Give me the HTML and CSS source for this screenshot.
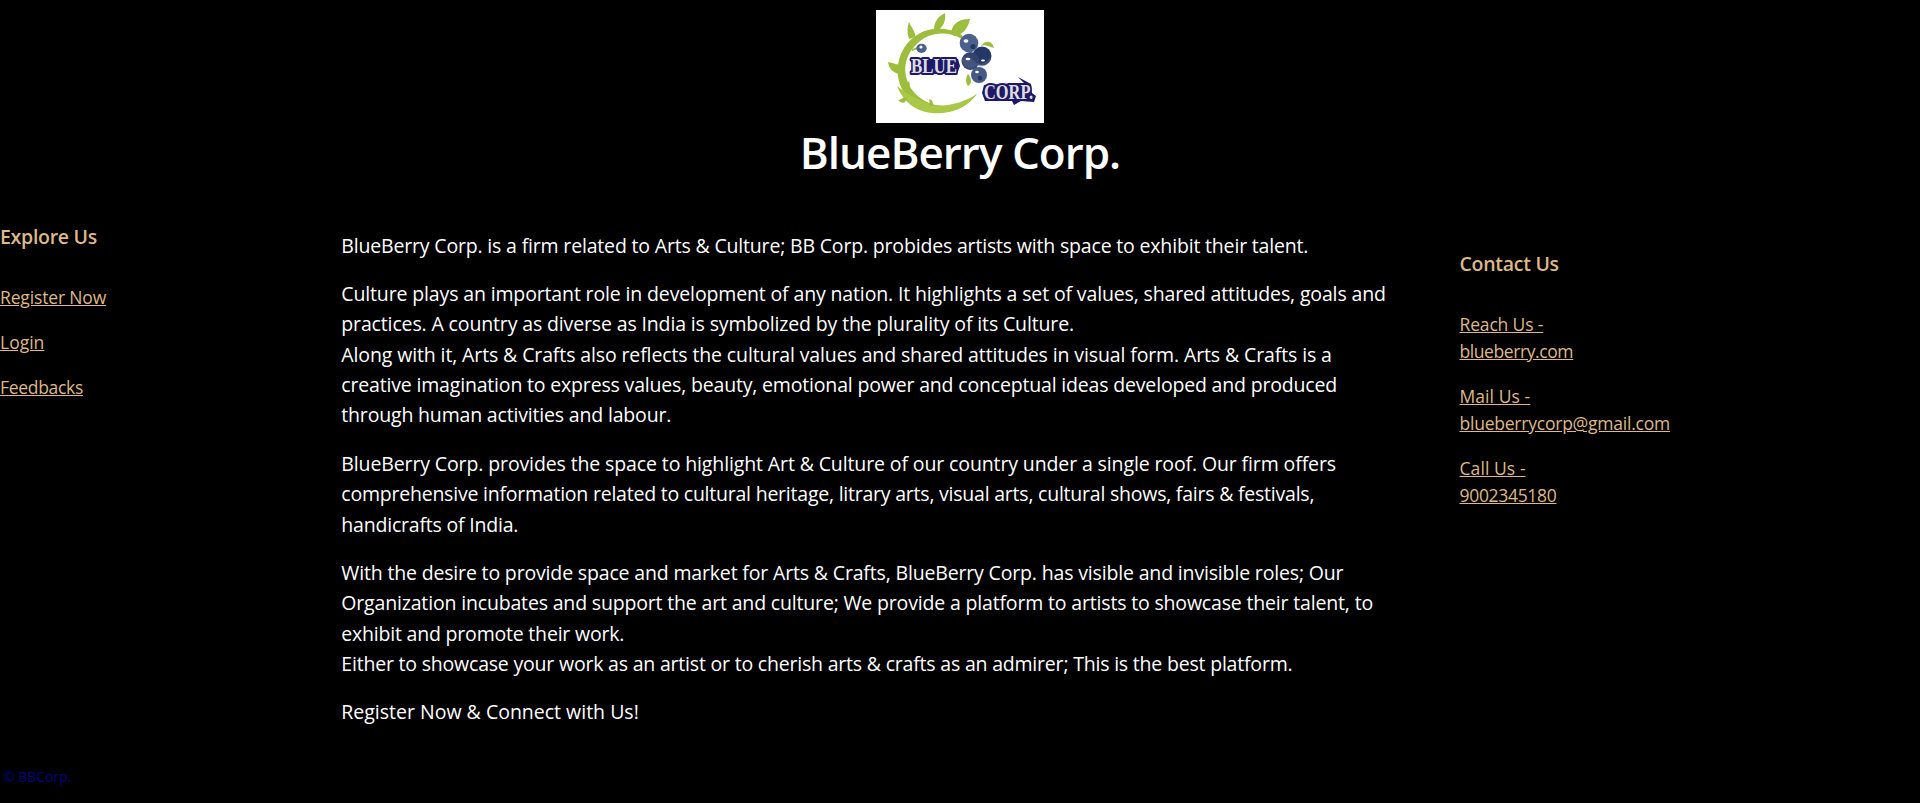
FILE: index.html
```
<!DOCTYPE html>
<html lang="en">
<head>
<meta charset="utf-8">
<title>BlueBerry Corp.</title>
<link rel="stylesheet" href="styles.css">
</head>
<body>
<header class="header">
  <svg class="logo" viewBox="0 0 168 113" role="img" aria-label="Blue Corp. logo">
    <rect width="168" height="113" fill="#fff"/>
    <path d="M86 25C68 14 42 16 28 38C12 65 28 97 57 102C77 105 92 96 101 84C84 96 65 100 49 91C27 79 23 52 39 36C51 22 70 20 86 29Z" fill="#9dbd3d"/>
    <path d="M21 76C29 96 46 105 66 103C82 101 94 93 101 84C84 95 61 100 44 90C35 87 29 82 21 76Z" fill="#a9c847"/>
    <path d="M58 20C58 11 63 6 69 3C70 11 67 17 62 20ZM75 24C76 12 85 9 94 9C92 19 86 25 79 26ZM33 29C31 23 31 17 33 12C36 19 40 22 39 27ZM24 64C17 63 13 59 12 52C18 53 22 55 26 55ZM29 92C27 94 24 92 22 90C25 90 28 86 31 88ZM54 96C53 93 54 92 53 89C57 90 57 93 57 96ZM32 76C32 73 31 73 33 71C35 77 33 80 31 80ZM36 39L42 37L42 39L36 41ZM105 36C109 30 116 30 118 38C113 37 109 34 105 36ZM92 64C96 69 96 74 92 76C89 72 90 67 92 64Z" fill="#9dbd3d"/>
    <circle cx="106" cy="46" r="9.500" fill="#253766"/>
    <circle cx="93" cy="33" r="9.300" fill="#4c608c"/>
    <circle cx="94.500" cy="51" r="9" fill="#33426f"/>
    <circle cx="103" cy="65" r="8" fill="#475a87"/>
    <ellipse cx="45.500" cy="38.300" rx="5.200" ry="4.600" fill="#4c608c"/>
    <path d="M98 52C105 56 112 52 115 46C115 57 105 58 98 55ZM84 35C88 42 98 42 102 35C101 44 87 45 84 35ZM86 48C91 46 98 49 101 54C99 61 87 61 86 48Z" fill="#596b94" opacity=".45"/>
    <circle cx="97" cy="36.500" r="2.600" fill="#253766"/>
    <circle cx="104" cy="68" r="2.200" fill="#253766"/>
    <g fill="#fff"><ellipse cx="90" cy="31" rx="2.400" ry="1.800"/><ellipse cx="92" cy="49" rx="2.300" ry="1.200"/><ellipse cx="107" cy="50.500" rx="2" ry="1"/><ellipse cx="101" cy="62" rx="1.800" ry="1.300"/><circle cx="45" cy="37" r="1.600"/></g>
    <path d="M34 49H82L84 56L81 64H35L37 57Z" fill="#1d1868"/>
    <path d="M108 75L140 73L148 73L142 67L155 74L156 83L160 86L158 92L145 91L138 95L136 91L109 91L106 83Z" fill="#1d1868"/>
    <text class="logo-text" x="35" y="62.500" textLength="46" lengthAdjust="spacingAndGlyphs">BLUE</text>
    <text class="logo-text" x="108" y="88.500" textLength="49" lengthAdjust="spacingAndGlyphs">CORP.</text>
  </svg>
  <h1 class="title">BlueBerry Corp.</h1>
</header>
<main class="columns">
  <nav class="side">
    <h2 class="side-title">Explore Us</h2>
    <p><a href="#" class="snug">Register Now</a></p>
    <p><a href="#">Login</a></p>
    <p><a href="#" class="tight">Feedbacks</a></p>
  </nav>
  <section class="about">
    <p><span class="t17">BlueBerry Corp. is a firm related to Arts &amp; Culture; BB Corp. probides artists with space to exhibit their talent.</span></p>
    <p><span class="t14">Culture plays an important role in development of any nation. It highlights a set of values, shared attitudes, goals and</span><br>
    <span class="t14">practices. A country as diverse as India is symbolized by the plurality of its Culture.</span><br>
    <span class="t12">Along with it, Arts &amp; Crafts also reflects the cultural values and shared attitudes in visual form. Arts &amp; Crafts is a</span><br>
    <span class="t17">creative imagination to express values, beauty, emotional power and conceptual ideas developed and produced</span><br>
    <span class="t17">through human activities and labour.</span></p>
    <p><span class="t12">BlueBerry Corp. provides the space to highlight Art &amp; Culture of our country under a single roof. Our firm offers</span><br>
    <span class="t22">comprehensive information related to cultural heritage, litrary arts, visual arts, cultural shows, fairs &amp; festivals,</span><br>
    <span class="t20">handicrafts of India.</span></p>
    <p><span class="t15">With the desire to provide space and market for Arts &amp; Crafts, BlueBerry Corp. has visible and invisible roles; Our</span><br>
    <span class="t16">Organization incubates and support the art and culture; We provide a platform to artists to showcase their talent, to</span><br>
    <span class="t20">exhibit and promote their work.</span><br>
    <span class="t20">Either to showcase your work as an artist or to cherish arts &amp; crafts as an admirer; This is the best platform.</span></p>
    <p>Register Now &amp; Connect with Us!</p>
  </section>
  <aside class="side contact">
    <h2 class="side-title">Contact Us</h2>
    <p><a href="#" class="snug">Reach Us -</a><br><a href="#" class="tighter">blueberry.com</a></p>
    <p><a href="#" class="loose">Mail Us -</a><br><a href="#" class="t22">blueberrycorp@gmail.com</a></p>
    <p><a href="#" class="loose">Call Us -</a><br><a href="#" class="tight">9002345180</a></p>
  </aside>
</main>
<footer class="footer">© BBCorp.</footer>
</body>
</html>
```
FILE: styles.css
```
body { margin: 0; background: #000; color: #fff; font-family: "Open Sans", sans-serif; font-size: 17.5px; line-height: 27px; }
.header { height: 178px; padding-top: 10px; box-sizing: border-box; text-align: center; }
.logo { display: block; width: 168px; height: 113px; margin: 0 auto 2px; overflow: visible; }
.logo-text { font: bold 20.5px "Liberation Serif", serif; fill: #dedede; stroke: #1d1868; stroke-width: 4px; stroke-linejoin: round; paint-order: stroke; }
.title { margin: 0; font-size: 44px; font-weight: 600; line-height: 54px; letter-spacing: -0.98px; }
.columns { display: grid; grid-template-columns: 341.3px 1118.2px 1fr; height: 588px; }
.side { padding-top: 47px; color: #deb887; }
.contact { padding-top: 74px; }
.side-title { margin: 0 0 35px; font-size: 19.5px; font-weight: 600; line-height: 24px; letter-spacing: -0.28px; }
.side p { margin: 0 0 18px; }
.side a { color: inherit; }
.about { padding-top: 52.6px; font-size: 19.5px; line-height: 30.375px; white-space: nowrap; }
.about p { margin: 0 0 18px; }
.footer { padding-left: 3px; color: #000080; font-size: 14px; line-height: 21px; }

/* tracking */
.t12 { letter-spacing: -0.12px; }
.t14 { letter-spacing: -0.14px; }
.t15 { letter-spacing: -0.162px; }
.t16 { letter-spacing: -0.168px; }
.t17 { letter-spacing: -0.175px; }
.t20 { letter-spacing: -0.2px; }
.t22 { letter-spacing: -0.225px; }
.snug { letter-spacing: -0.15px; }
.tight { letter-spacing: -0.31px; }
.tighter { letter-spacing: -0.41px; }
.loose { letter-spacing: 0.08px; }
```
